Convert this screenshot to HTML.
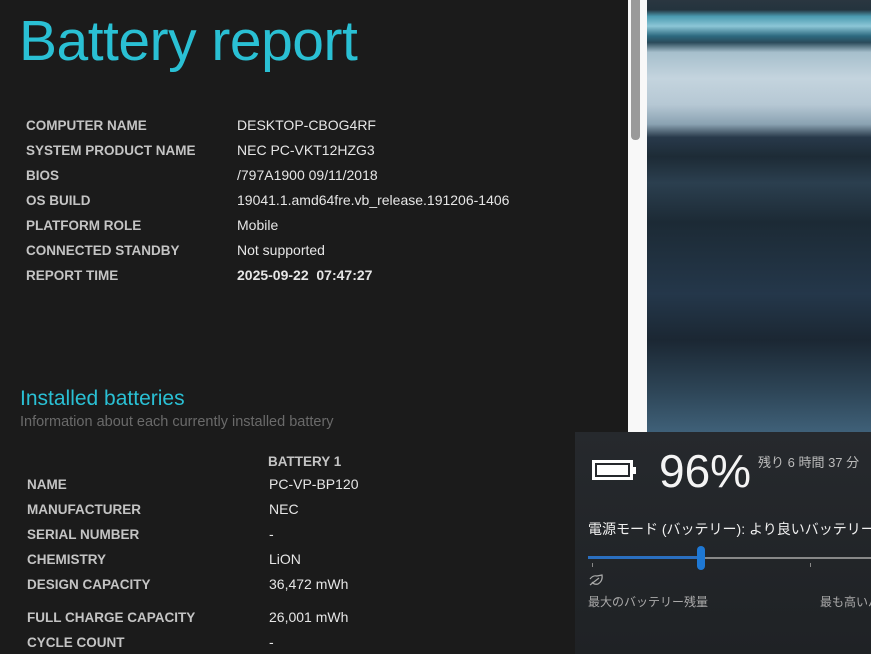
<!DOCTYPE html>
<html><head><meta charset="utf-8"><style>
body{margin:0;width:871px;height:654px;overflow:hidden;background:#1b1b1b;position:relative;font-family:"Liberation Sans","Noto Sans CJK JP",sans-serif}
.a{position:absolute;white-space:nowrap}
.l{font-size:13.5px;font-weight:bold;color:#c4c4c4;left:26px}
.v{font-size:14px;color:#e6e6e6;left:237px}
.l2{left:27px}.v2{left:269px}
.fl{position:absolute;left:575px;top:432px;width:296px;height:222px;overflow:hidden;background:linear-gradient(180deg,#26292d,#1f2225)}
.fl .a{}
</style></head><body>
<div class="a" style="left:19px;top:8px;font-size:57px;color:#2ac0d4;letter-spacing:-0.5px">Battery report</div>
<div class="a l" style="top:118px">COMPUTER NAME</div><div class="a v" style="top:117px">DESKTOP-CBOG4RF</div>
<div class="a l" style="top:143px">SYSTEM PRODUCT NAME</div><div class="a v" style="top:142px">NEC PC-VKT12HZG3</div>
<div class="a l" style="top:168px">BIOS</div><div class="a v" style="top:167px">/797A1900 09/11/2018</div>
<div class="a l" style="top:193px">OS BUILD</div><div class="a v" style="top:192px">19041.1.amd64fre.vb_release.191206-1406</div>
<div class="a l" style="top:218px">PLATFORM ROLE</div><div class="a v" style="top:217px">Mobile</div>
<div class="a l" style="top:243px">CONNECTED STANDBY</div><div class="a v" style="top:242px">Not supported</div>
<div class="a l" style="top:268px">REPORT TIME</div><div class="a v" style="top:267px;font-weight:bold">2025-09-22&nbsp; 07:47:27</div>
<div class="a" style="left:20px;top:387px;font-size:21px;color:#2ac0d4">Installed batteries</div>
<div class="a" style="left:20px;top:414px;font-size:14.5px;color:#6a6a6a">Information about each currently installed battery</div>
<div class="a l" style="left:268px;top:454px">BATTERY 1</div>
<div class="a l l2" style="top:477px">NAME</div><div class="a v v2" style="top:476px">PC-VP-BP120</div>
<div class="a l l2" style="top:502px">MANUFACTURER</div><div class="a v v2" style="top:501px">NEC</div>
<div class="a l l2" style="top:527px">SERIAL NUMBER</div><div class="a v v2" style="top:526px">-</div>
<div class="a l l2" style="top:552px">CHEMISTRY</div><div class="a v v2" style="top:551px">LiON</div>
<div class="a l l2" style="top:577px">DESIGN CAPACITY</div><div class="a v v2" style="top:576px">36,472 mWh</div>
<div class="a l l2" style="top:610px">FULL CHARGE CAPACITY</div><div class="a v v2" style="top:609px">26,001 mWh</div>
<div class="a l l2" style="top:635px">CYCLE COUNT</div><div class="a v v2" style="top:634px">-</div>
<div class="a" style="left:628px;top:0;width:19px;height:654px;background:#f8f8f8"></div>
<div class="a" style="left:631px;top:0;width:9px;height:140px;background:#9a9a9a;border-radius:0 0 4px 4px"></div>
<div class="a" style="left:647px;top:0;width:224px;height:654px;background:linear-gradient(180deg,#2a3640 0%,#24343e 1.5%,#4a9ab0 2.5%,#8cc6d6 4%,#2d6a80 5.5%,#2a4a5a 6.5%,#a6bfcc 8%,#c4d4de 12%,#b6c8d4 16%,#8aa2b2 19%,#28394a 21%,#1d2b36 24%,#2b3f4f 28%,#1c2a35 34%,#24374a 45%,#1b2733 52%,#2e4658 60%,#3f6078 66%,#1e2f3d 72%,#2d4a60 78%,#6a9ab6 84%,#28435a 90%,#6d9ab5 96%,#3a5a72 100%)"></div>
<div class="fl">
<div class="a" style="left:17px;top:28px;width:41px;height:20px;border:3px solid #fff;box-sizing:border-box"></div>
<div class="a" style="left:22px;top:33px;width:31px;height:10px;background:#fff"></div>
<div class="a" style="left:58px;top:35px;width:3px;height:7px;background:#fff"></div>
<div class="a" style="left:84px;top:12px;font-size:46px;color:#f4f4f4">96%</div>
<div class="a" style="left:183px;top:20px;font-size:13px;color:#bbb">残り 6 時間 37 分</div>
<div class="a" style="left:13px;top:87px;font-size:14px;color:#f0f0f0">電源モード (バッテリー): より良いバッテリー</div>
<div class="a" style="left:13px;top:124px;width:113px;height:3px;background:#2a6fc0"></div>
<div class="a" style="left:126px;top:125px;width:170px;height:2px;background:#888"></div>
<div class="a" style="left:122px;top:114px;width:8px;height:24px;background:#1e78d4;border-radius:4px"></div>
<div class="a" style="left:17px;top:131px;width:1px;height:4px;background:#888"></div>
<div class="a" style="left:235px;top:131px;width:1px;height:4px;background:#888"></div>
<svg class="a" style="left:13px;top:141px" width="18" height="16" viewBox="0 0 18 16"><path d="M2 6 Q5 2 9 3 L14 2 Q15 8 10 11 Q6 12 4 9 M2 12 L11 5" fill="none" stroke="#aaa" stroke-width="1.2"/></svg>
<div class="a" style="left:13px;top:161px;font-size:12px;color:#aaa">最大のバッテリー残量</div>
<div class="a" style="left:245px;top:161px;font-size:12px;color:#aaa">最も高いパフォーマンス</div>
</div>
</body></html>
